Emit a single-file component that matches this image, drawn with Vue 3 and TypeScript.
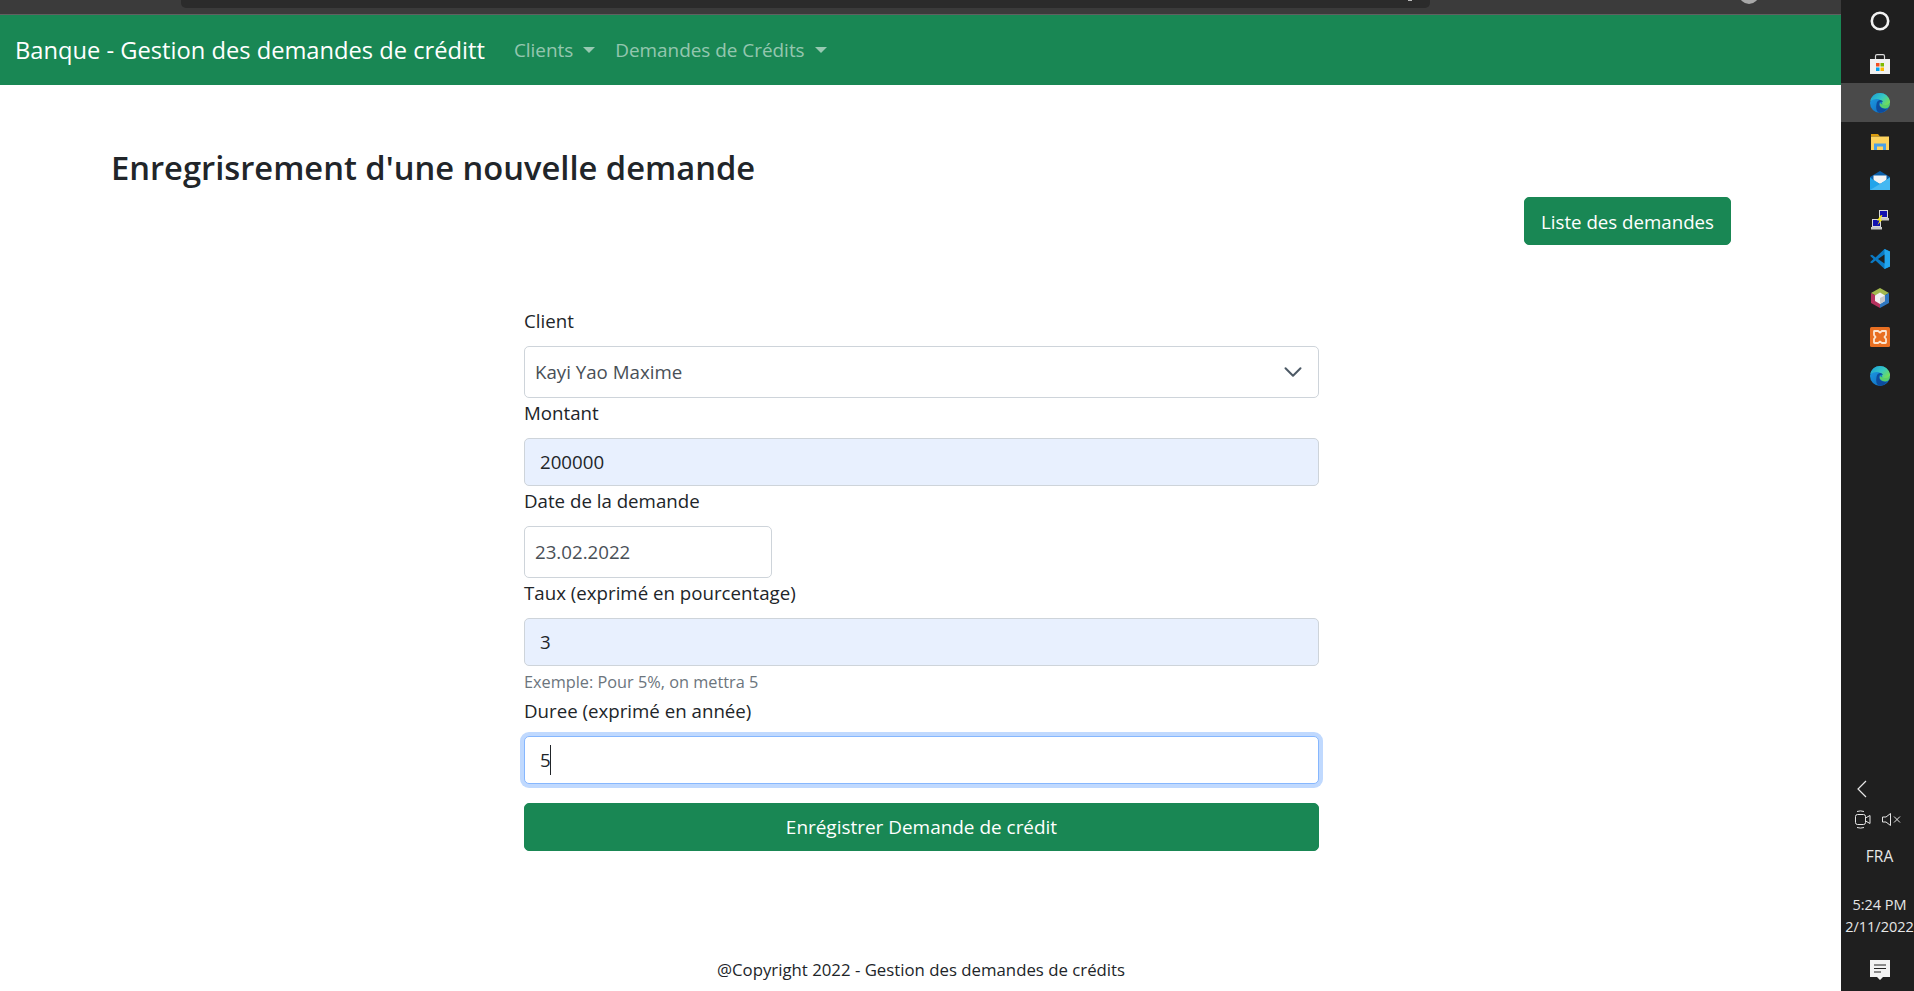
<script setup lang="ts">
const trayIcons = ['store', 'edge', 'folder', 'mail', 'putty', 'vscode', 'netbeans', 'xampp', 'edge2']
</script>

<template>
  <div class="screen">
    <div class="browser">
      <div class="chrome">
        <div class="address"><span class="address__dot"></span></div>
        <span class="avatar"></span>
      </div>

      <nav class="navbar">
        <a class="brand">Banque - Gestion des demandes de créditt</a>
        <a class="nav-link">Clients<i class="caret"></i></a>
        <a class="nav-link">Demandes de Crédits<i class="caret"></i></a>
      </nav>

      <main class="content">
        <h2 class="title">Enregrisrement d'une nouvelle demande</h2>
        <div class="actions"><button class="btn">Liste des demandes</button></div>

        <form class="form" @submit.prevent>
          <label class="label">Client</label>
          <div class="select">
            <span>Kayi Yao Maxime</span>
            <svg width="20" height="20" viewBox="0 0 16 16"><path d="M2 5l6 6 6-6" fill="none" stroke="#4d5a66" stroke-width="1.6" stroke-linecap="round" stroke-linejoin="round" /></svg>
          </div>

          <label class="label">Montant</label>
          <input class="input input--filled" value="200000" readonly />

          <label class="label">Date de la demande</label>
          <div class="select select--date">23.02.2022</div>

          <label class="label">Taux (exprimé en pourcentage)</label>
          <input class="input input--filled" value="3" readonly />
          <div class="help">Exemple: Pour 5%, on mettra 5</div>

          <label class="label">Duree (exprimé en année)</label>
          <div class="focus-wrap">
            <input class="input input--focus" value="5" readonly />
            <span class="cursor"></span>
          </div>

          <button class="btn btn--block">Enrégistrer Demande de crédit</button>
        </form>

        <footer class="footer">@Copyright 2022 - Gestion des demandes de crédits</footer>
      </main>
    </div>

    <aside class="taskbar">
      <div class="tray">
        <div class="tray__cortana">
          <svg width="20" height="20" viewBox="0 0 20 20"><circle cx="10" cy="10" r="8.2" fill="none" stroke="#f2f2f2" stroke-width="2.6" /></svg>
        </div>
        <div v-for="icon in trayIcons" :key="icon" class="tray__item" :class="{ 'tray__item--active': icon === 'edge' }">
          <svg v-if="icon === 'store'" width="20" height="20" viewBox="0 0 20 20">
            <path d="M5.5 6V2.2Q5.500 .7 7 .7h6q1.500 0 1.500 1.500V6" fill="none" stroke="#dcdcdc" stroke-width="1.2" />
            <rect y="5" width="20" height="15" fill="#f1f1f1" />
            <rect x="6" y="9" width="3.5" height="3.5" fill="#f25022" />
            <rect x="10.500" y="9" width="3.5" height="3.5" fill="#7fba00" />
            <rect x="6" y="13.500" width="3.5" height="3.5" fill="#00a4ef" />
            <rect x="10.500" y="13.500" width="3.5" height="3.5" fill="#ffb900" />
          </svg>
          <svg v-else-if="icon === 'edge' || icon === 'edge2'" width="20" height="20" viewBox="0 0 20 20">
            <defs>
              <linearGradient :id="icon + '-a'" x1="0" y1="0" x2="1" y2="1">
                <stop offset="0" stop-color="#1f9fe6" />
                <stop offset="1" stop-color="#0b63b8" />
              </linearGradient>
              <linearGradient :id="icon + '-b'" x1="0" y1="0" x2="1" y2="0.6">
                <stop offset="0" stop-color="#1a9bd6" />
                <stop offset="0.6" stop-color="#36c8c4" />
                <stop offset="1" stop-color="#6fdc5e" />
              </linearGradient>
            </defs>
            <circle cx="10" cy="10" r="10" :fill="'url(#' + icon + '-a)'" />
            <path d="M.3 8Q2.500 0 10 0q7.500 0 10 8 .5 4-3 4.500-3 .5-5-1 .8-3-1.500-4.500Q6 4.500 .3 8z" :fill="'url(#' + icon + '-b)'" />
            <path d="M20 9.500q0 4-2.500 5.500-3 1.500-6-.5-2.500-2-1.500-4.500 2.500 2.500 6 2 3.500-.5 4-2.500z" fill="#57cf6c" />
            <path d="M6.500 11q.5-3.500 3.500-4 2.500 0 3 2-2.800-1-3.600.8-1 3 2 5 2.500 1.500 6 .7-3 4-7.900 4.500Q5 18 6.500 11z" fill="#0d4c9e" />
          </svg>
          <svg v-else-if="icon === 'folder'" width="20" height="16" viewBox="0 0 20 16">
            <path d="M1 0h7l2 2.500H1z" fill="#d99a0b" />
            <rect x="1" y="2.500" width="18" height="13.500" fill="#fdd35e" />
            <path d="M4 16V9.500h12V16h-3v-3.500H7V16z" fill="#4aa0e6" />
          </svg>
          <svg v-else-if="icon === 'mail'" width="20" height="19" viewBox="0 0 20 19">
            <path d="M0 6 10 0l10 6v2H0z" fill="#0a5ea8" />
            <path d="M3.500 4.500h13V10L10 13 3.500 10z" fill="#f4f4f4" />
            <path d="M0 6.500 10 13l10-6.500V19H0z" fill="#22a4ea" />
            <path d="M0 19 10 13l10-6.500V19z" fill="#45b8f2" />
          </svg>
          <svg v-else-if="icon === 'putty'" width="20" height="20" viewBox="0 0 20 20">
            <rect x="9.500" y="0.500" width="8" height="7" fill="#1212b0" stroke="#d8d8d8" />
            <rect x="9" y="8" width="10" height="2.500" fill="#c8c8c8" />
            <rect x="2.500" y="9.500" width="8" height="7" fill="#1212b0" stroke="#d8d8d8" />
            <rect x="1" y="17" width="11" height="2.500" fill="#c8c8c8" />
            <path d="M11 5 7 10.500h2.500L7.500 15l5-5.500H10l2.500-4z" fill="#f5e61a" />
          </svg>
          <svg v-else-if="icon === 'vscode'" width="20" height="20" viewBox="0 0 20 20">
            <path d="M14.500 0 20 2.500v15L14.500 20 5.500 11.500 2 14.300 0 13.200 3.500 10 0 6.800 2 5.700 5.500 8.500z" fill="#0b7ac4" />
            <path d="M14.500 0 20 2.500v15L14.500 20z" fill="#22a5ee" />
            <path d="M14.500 5.500 8 10l6.500 4.500z" fill="#1f1f1f" />
          </svg>
          <svg v-else-if="icon === 'netbeans'" width="20" height="20" viewBox="0 0 20 20">
            <path d="M10 0 19 5l-9 5-9-5z" fill="#a3b84e" />
            <path d="M1 5l9 5v10l-9-5z" fill="#b5325e" />
            <path d="M19 5l-9 5v10l9-5z" fill="#2f77c0" />
            <path d="M10 4.500 15 7.500V13l-5 3-5-3V7.500z" fill="#f2f2f2" />
            <path d="M10 10l5-2.500V13l-5 3z" fill="#c9c9c9" />
          </svg>
          <svg v-else width="20" height="20" viewBox="0 0 20 20">
            <rect width="20" height="20" rx="1.5" fill="#e86f22" />
            <path d="M4.500 4H8l2 1.500L12 4h3.500Q16 4 16 4.500V8l-1.500 2L16 12v3.500q0 .5-.5.5H12l-2-1.500L8 16H4.500Q4 16 4 15.500V12l1.500-2L4 8V4.500Q4 4 4.500 4z" fill="none" stroke="#fbe5d2" stroke-width="1.8" />
          </svg>
        </div>
      </div>

      <div class="system">
        <div class="system__row">
          <svg class="chevron" width="10" height="18" viewBox="0 0 10 18"><path d="M9 1 1 9l8 8" fill="none" stroke="#e6e6e6" stroke-width="1.2" /></svg>
        </div>
        <div class="system__row system__row--media">
          <svg width="16" height="19" viewBox="0 0 16 19" fill="none" stroke="#e6e6e6"><rect x="0.500" y="4.500" width="10" height="10" rx="2" /><path d="M10.500 8 15 5.500v8L10.500 11zM2 1.500q3.500-1.200 7 0M2 17.500q3.500 1.200 7 0" /></svg>
          <svg width="19" height="13" viewBox="0 0 19 13" fill="none" stroke="#e6e6e6"><path d="M.5 4H4L8.500.5v12L4 9H.5z" /><path d="M12 3.500l6 6M18 3.500l-6 6" /></svg>
        </div>
        <div class="system__lang">FRA</div>
        <div class="system__clock">
          <span>5:24 PM</span>
          <span>2/11/2022</span>
        </div>
        <div class="system__notif">
          <svg width="20" height="20" viewBox="0 0 20 20"><path d="M0 0h20v17h-7l-3 3-3-3H0z" fill="#f2f2f2" /><path d="M4 5h12M4 8.500h12M4 12h7" stroke="#222" stroke-width="1" /></svg>
        </div>
      </div>
    </aside>
  </div>
</template>

<style>
html, body { margin: 0; overflow: hidden; background: #fff; }
</style>

<style scoped>
.screen {
  display: flex;
  height: 991px;
  font-family: "Open Sans", "Liberation Sans", sans-serif;
  font-size: 18.7px;
  color: #212529;
  overflow: hidden;
}

.browser {
  flex: 1;
  min-width: 0;
  display: flex;
  flex-direction: column;
}

.chrome {
  height: 14px;
  flex-shrink: 0;
  background: #3b3b3b;
  border-bottom: 1px solid #606060;
  padding-left: 181px;
  display: flex;
  align-items: flex-start;
  position: relative;
  overflow: hidden;
}

.address {
  width: 1249px;
  height: 8px;
  background: #2b2b2b;
  border-radius: 0 0 5px 5px;
  position: relative;
}

.address__dot {
  position: absolute;
  right: 18px;
  top: -2px;
  width: 4px;
  height: 3px;
  background: #bbb;
}

.avatar {
  position: absolute;
  left: 1739px;
  top: -16px;
  width: 20px;
  height: 20px;
  border-radius: 50%;
  background: #a8a8a8;
}

.navbar {
  height: 70px;
  flex-shrink: 0;
  background: #198754;
  display: flex;
  align-items: center;
  padding-left: 15px;
}

.brand {
  color: #fff;
  font-size: 23.7px;
  margin-right: 29px;
  white-space: nowrap;
}

.nav-link {
  color: rgba(255, 255, 255, 0.55);
  font-size: 18.9px;
  padding-right: 20px;
  display: flex;
  align-items: center;
  white-space: nowrap;
}

.caret {
  margin-left: 10px;
  border-top: 6px solid rgba(255, 255, 255, 0.55);
  border-left: 6px solid transparent;
  border-right: 6px solid transparent;
}

.content {
  flex: 1;
  display: flex;
  flex-direction: column;
  padding: 0 110px 0 111px;
  min-height: 0;
}

.title {
  margin: 60px 0 0;
  font-size: 32.7px;
  line-height: 46px;
  font-weight: 600;
}

.actions {
  display: flex;
  justify-content: flex-end;
  margin-top: 6px;
}

.btn {
  height: 48px;
  padding: 0 16px;
  font: inherit;
  color: #fff;
  background: #198754;
  border: 1px solid #198754;
  border-radius: 5px;
}

.form {
  width: 795px;
  margin: 61px 0 0 413px;
  display: flex;
  flex-direction: column;
}

.label {
  height: 30px;
  line-height: 30px;
  margin-bottom: 10px;
  white-space: nowrap;
}

.select {
  height: 52px;
  box-sizing: border-box;
  border: 1px solid #ced4da;
  border-radius: 5px;
  padding: 0 15px 1px 10px;
  display: flex;
  align-items: center;
  justify-content: space-between;
  color: #495057;
}

.select--date {
  width: 248px;
}

.input {
  height: 48px;
  width: 100%;
  box-sizing: border-box;
  border: 1px solid #ced4da;
  border-radius: 5px;
  padding: 0 15px 1px;
  font: inherit;
  color: #212529;
  outline: none;
  margin: 0;
  display: block;
}

.input--filled {
  background: #e8f0fe;
}

.focus-wrap {
  position: relative;
}

.input--focus {
  border-color: #86b7fe;
  box-shadow: 0 0 0 4px #c0d9fe;
}

.cursor {
  position: absolute;
  left: 26px;
  top: 9px;
  width: 1px;
  height: 30px;
  background: #212529;
}

.help {
  font-size: 16.3px;
  line-height: 24px;
  color: #6c757d;
  margin: 4px 0 2px;
}

.btn--block {
  margin-top: 19px;
  width: 100%;
  font-size: 18.95px;
}

.footer {
  margin-top: auto;
  height: 38px;
  text-align: center;
  font-size: 16.8px;
  line-height: 34px;
}

.taskbar {
  width: 73px;
  flex-shrink: 0;
  background: #1f1f1f;
  display: flex;
  flex-direction: column;
  justify-content: space-between;
  color: #e6e6e6;
  font-size: 15.5px;
}

.tray__cortana {
  height: 44px;
  display: flex;
  justify-content: center;
  align-items: flex-start;
  padding: 11px 0 0 4px;
  box-sizing: border-box;
}

.tray__item {
  height: 39px;
  padding-left: 4px;
  display: flex;
  align-items: center;
  justify-content: center;
}

.tray__item--active {
  background: #4a4a4a;
}

.system__row {
  height: 30px;
  display: flex;
  align-items: center;
  padding-left: 16px;
}

.system__row--media {
  gap: 11px;
  padding-left: 14px;
}

.system__lang {
  margin-top: 7px;
  padding-left: 4px;
  height: 30px;
  line-height: 30px;
  text-align: center;
}

.system__clock {
  margin-top: 23px;
  padding-left: 4px;
  display: flex;
  flex-direction: column;
  align-items: center;
  line-height: 22px;
  white-space: nowrap;
  font-size: 14.5px;
}

.system__notif {
  margin-top: 22px;
  padding-left: 4px;
  height: 31px;
  display: flex;
  justify-content: center;
}
</style>
